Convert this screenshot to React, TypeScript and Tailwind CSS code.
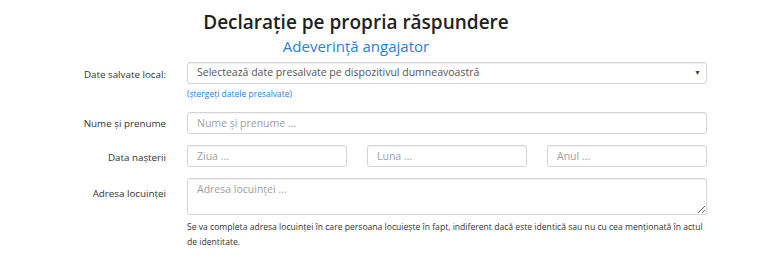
import React from "react";

const font = { fontFamily: '"Open Sans", "Noto Sans", sans-serif' };

const inputCls =
  "h-[22px] w-full rounded-[3px] border border-[#d4d4d4] bg-white px-[9px] text-[10.5px] text-[#555] placeholder:text-[#a0a0a0] shadow-[inset_0_1px_1px_rgba(0,0,0,0.06)] outline-none";

const Label = ({ children }: { children: React.ReactNode }) => (
  <div className="w-[166px] shrink-0 pt-[5px] text-right text-[9.8px] text-[#333]">
    {children}
  </div>
);

export default function App() {
  return (
    <div className="h-[256px] w-[768px] overflow-hidden bg-white" style={font}>
      <div className="w-[712px] pt-[8px] text-center">
        <h1 className="text-[19px] font-semibold leading-[28px] text-[#222]">
          Declarație pe propria răspundere
        </h1>
        <h2 className="text-[15px] leading-[20px] text-[#2b7fd3]">
          Adeverință angajator
        </h2>
      </div>

      <div className="mt-[6px] flex items-center gap-[21px]">
        <Label>Date salvate local:</Label>
        <div className="relative w-[520px]">
          <div className={inputCls + " flex items-center"}>
            Selectează date presalvate pe dispozitivul dumneavoastră
          </div>
          <span className="absolute right-[6px] top-[6px] text-[7px] text-[#444]">
            ▼
          </span>
        </div>
      </div>
      <div className="ml-[187px] mt-[3px] text-[8.5px] leading-[14px] text-[#2b7fd3]">
        (ștergeți datele presalvate)
      </div>

      <div className="mt-[8px] flex items-center gap-[21px]">
        <Label>Nume și prenume</Label>
        <div className="w-[520px]">
          <input className={inputCls} placeholder="Nume și prenume ..." />
        </div>
      </div>

      <div className="mt-[11px] flex items-center gap-[21px]">
        <Label>Data nașterii</Label>
        <div className="flex w-[520px] gap-[20px]">
          <input className={inputCls} placeholder="Ziua ..." />
          <input className={inputCls} placeholder="Luna ..." />
          <input className={inputCls} placeholder="Anul ..." />
        </div>
      </div>

      <div className="mt-[11px] flex items-start gap-[21px]">
        <div className="pt-[4px]">
          <Label>Adresa locuinței</Label>
        </div>
        <div className="w-[520px]">
          <textarea
            className={inputCls + " block h-[37px] resize-y py-[3px] leading-[14px]"}
            placeholder="Adresa locuinței ..."
          />
          <p className="mt-[5px] text-[8.6px] leading-[15px] text-[#333]">
            Se va completa adresa locuinței în care persoana locuiește în fapt,
            indiferent dacă este identică sau nu cu cea menționată în actul de
            identitate.
          </p>
        </div>
      </div>
    </div>
  );
}
